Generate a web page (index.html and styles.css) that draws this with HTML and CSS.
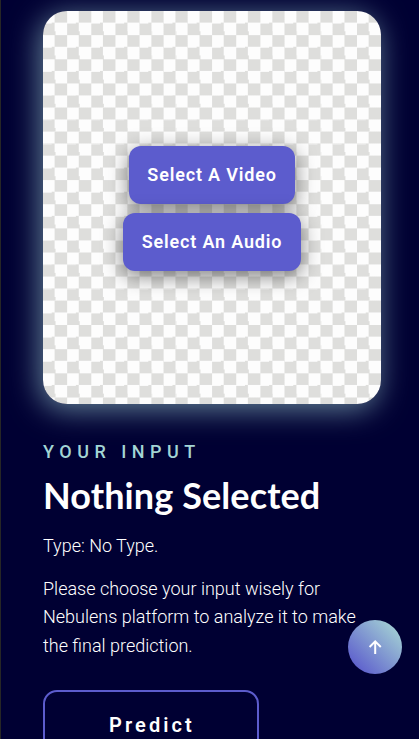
FILE: index.html
```
<!DOCTYPE html>
<html lang="en">
<head>
<meta charset="utf-8">
<meta name="viewport" content="width=device-width, initial-scale=1">
<title>Nebulens</title>
<link rel="stylesheet" href="styles.css">
</head>
<body>
<main class="page">
  <section class="preview">
    <button class="btn">Select A Video</button>
    <button class="btn btn-audio">Select An Audio</button>
  </section>
  <section class="content">
    <p class="subtitle">Your Input</p>
    <h2 class="title">Nothing Selected</h2>
    <p class="text">Type: No Type.</p>
    <p class="text">Please choose your input wisely for<br>Nebulens platform to analyze it to make<br>the final prediction.</p>
    <button class="predict">Predict</button>
  </section>
</main>
<a class="back-top" href="#" aria-label="Back to top">
  <svg width="14" height="16" viewBox="0 0 14 16" fill="none" stroke="currentColor" stroke-width="2"><path d="M7.2 15V2.4M1.6 8 7.2 2.4 12.8 8"/></svg>
</a>
</body>
</html>
```
FILE: styles.css
```
* { box-sizing: border-box; margin: 0; padding: 0; }
html, body { height: 100%; overflow: hidden; }
body { background: #000033; color: #fff; font-family: Roboto, sans-serif; }
.page {
  height: 100%;
  overflow: hidden;
  padding: 11px 38px 0 42px;
  border-left: 1px solid #262626;
}
.preview {
  width: 338px;
  height: 393px;
  border-radius: 24px;
  display: flex;
  flex-direction: column;
  align-items: center;
  justify-content: center;
  gap: 9px;
  padding-top: 1px;
  background:
    repeating-linear-gradient(90deg, transparent 0 11.6px, rgba(236,236,235,.75) 11.6px 12.08px),
    repeating-linear-gradient(180deg, transparent 0 11.6px, rgba(236,236,235,.75) 11.6px 12.08px),
    repeating-conic-gradient(#dededc 0 25%, #fdfdfd 0 50%) 0 0 / 24.16px 24.16px;
  box-shadow: -3px 5px 30px rgba(163, 215, 217, .62);
}
.btn {
  width: 166px;
  height: 58px;
  border: 0;
  border-radius: 12px;
  background: #5c5ccd;
  color: #fff;
  font: 600 18px/58px Roboto, sans-serif;
  letter-spacing: .82px;
  white-space: nowrap;
  box-shadow: 0 5px 20px rgba(0, 0, 0, .5);
}
.btn-audio { width: 178px; }
.content { padding-top: 34px; }
.subtitle {
  color: #a3d5d5;
  font-size: 18px;
  font-weight: 500;
  line-height: 28px;
  letter-spacing: 5.5px;
  text-transform: uppercase;
}
.title {
  margin-top: 7px;
  font: 700 36px/44px Lato, sans-serif;
  letter-spacing: .1px;
  white-space: nowrap;
}
.text {
  margin-top: 14px;
  font-size: 18px;
  font-weight: 300;
  line-height: 28.6px;
  white-space: nowrap;
}
.title + .text { margin-top: 15px; }
.predict {
  display: block;
  width: 216px;
  height: 70px;
  margin-top: 30px;
  padding-left: 2px;
  border: 2px solid #5c5ccd;
  border-radius: 14px;
  background: transparent;
  color: #fff;
  font: 600 20px/66px Roboto, sans-serif;
  letter-spacing: 3.1px;
}
.back-top {
  position: fixed;
  left: 348px;
  top: 620px;
  width: 54px;
  height: 54px;
  border-radius: 50%;
  display: flex;
  align-items: center;
  justify-content: center;
  color: #fff;
  background: linear-gradient(45deg, #5c5ccd 10%, #a3d0d4 90%);
}
```
